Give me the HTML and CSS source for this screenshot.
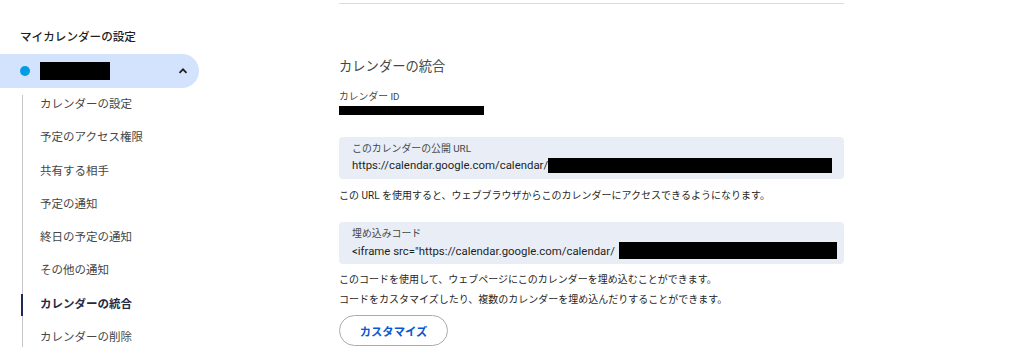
FILE: index.html
```html
<!DOCTYPE html>
<html lang="ja">
<head>
    <meta charset="UTF-8">
    <title>カレンダーの統合</title>
    <link rel="stylesheet" href="styles.css">
</head>
<body>
    <div class="page">
        <nav class="sidebar">
            <div class="side-title">マイカレンダーの設定</div>
            <div class="cal-row">
                <span class="dot"></span>
                <span class="redact cal-name"></span>
                <svg class="chevron" width="12" height="12" viewBox="0 0 12 12">
                    <path d="M2.5 7.8 L6 4.3 L9.5 7.8" fill="none" stroke="#1f1f1f" stroke-width="1.8"/>
                </svg>
            </div>
            <ul class="side-list">
                <li>カレンダーの設定</li>
                <li>予定のアクセス権限</li>
                <li>共有する相手</li>
                <li>予定の通知</li>
                <li>終日の予定の通知</li>
                <li>その他の通知</li>
                <li class="active">カレンダーの統合</li>
                <li>カレンダーの削除</li>
            </ul>
        </nav>

        <main class="main">
            <div class="divider"></div>
            <h2 class="section-title">カレンダーの統合</h2>

            <div class="field-label">カレンダー ID</div>
            <div class="redact cal-id"></div>

            <div class="box">
                <div class="box-label">このカレンダーの公開 URL</div>
                <div class="box-value">https://calendar.google.com/calendar/<span class="redact url-hide"></span></div>
            </div>
            <p class="note">この URL を使用すると、ウェブブラウザからこのカレンダーにアクセスできるようになります。</p>

            <div class="box">
                <div class="box-label">埋め込みコード</div>
                <div class="box-value">&lt;iframe src="https://calendar.google.com/calendar/<span class="redact code-hide"></span></div>
            </div>
            <p class="note first">このコードを使用して、ウェブページにこのカレンダーを埋め込むことができます。</p>
            <p class="note">コードをカスタマイズしたり、複数のカレンダーを埋め込んだりすることができます。</p>

            <button class="btn">カスタマイズ</button>
        </main>
    </div>
</body>
</html>
```

FILE: styles.css
```css
body {
    margin: 0;
    background: #ffffff;
    font-family: Roboto, "Noto Sans CJK JP", sans-serif;
    color: #444746;
}
.page {
    display: flex;
    height: 360px;
    overflow: hidden;
}
.sidebar {
    width: 200px;
    flex-shrink: 0;
    padding-top: 27px;
}
.side-title {
    padding-left: 20px;
    font-size: 11.6px;
    font-weight: 500;
    line-height: 20px;
    color: #1f1f1f;
}
.cal-row {
    margin-top: 7px;
    height: 34px;
    width: 199px;
    background: #d3e3fd;
    border-radius: 0 17px 17px 0;
    display: flex;
    align-items: center;
    box-sizing: border-box;
    padding-left: 20px;
    padding-right: 10px;
}
.dot {
    width: 10px;
    height: 10px;
    border-radius: 50%;
    background: #039be5;
}
.redact {
    display: inline-block;
    background: #000;
}
.cal-name {
    width: 70px;
    height: 18px;
    margin-left: 10px;
}
.chevron {
    margin-left: auto;
}
.side-list {
    list-style: none;
    margin: 0;
    padding: 0 0 0 23px;
    position: relative;
}
.side-list::before {
    content: "";
    position: absolute;
    left: 22px;
    top: 7px;
    bottom: 7px;
    width: 1px;
    background: #c4c7c5;
}
.side-list li {
    height: 33.3px;
    line-height: 33.3px;
    padding-left: 17px;
    font-size: 11.5px;
    color: #444746;
    position: relative;
}
.side-list li.active {
    font-weight: 700;
    color: #1f2a44;
}
.side-list li.active::before {
    content: "";
    position: absolute;
    left: -2px;
    top: 6px;
    bottom: 5px;
    width: 2px;
    background: #1a2a55;
}
.main {
    margin-left: 139px;
    width: 505px;
}
.divider {
    margin-top: 3px;
    height: 1px;
    background: #dadce0;
}
.section-title {
    margin: 54px 0 0;
    font-size: 13.3px;
    font-weight: 400;
    line-height: 18px;
    color: #444746;
}
.field-label {
    margin-top: 14px;
    font-size: 9.8px;
    line-height: 13px;
    color: #444746;
}
.cal-id {
    display: block;
    margin-top: 3px;
    width: 145px;
    height: 9px;
}
.box {
    background: #e9eef6;
    border-radius: 4px;
    height: 42px;
    box-sizing: border-box;
    padding: 5px 0 0 13px;
    overflow: hidden;
    white-space: nowrap;
}
.field-label + .cal-id + .box {
    margin-top: 22px;
}
.box-label {
    font-size: 9.9px;
    line-height: 13px;
    color: #444746;
}
.box-value {
    margin-top: 2px;
    font-size: 11.4px;
    line-height: 16px;
    color: #1f1f1f;
    display: flex;
    align-items: center;
}
.url-hide {
    width: 284px;
    height: 15px;
}
.code-hide {
    margin-left: 4px;
    width: 218px;
    height: 17px;
}
.note {
    margin: 10px 0 19px;
    font-size: 10px;
    line-height: 14px;
    color: #1f1f1f;
}
.note.first {
    margin: 9px 0 0;
}
.note.first + .note {
    margin: 6px 0 0;
}
.btn {
    margin-top: 8px;
    width: 109px;
    height: 31px;
    border: 1px solid #a8abaf;
    border-radius: 16px;
    background: #fff;
    font-family: Roboto, "Noto Sans CJK JP", sans-serif;
    font-size: 11.3px;
    font-weight: 700;
    color: #0b57d0;
    cursor: pointer;
}
```
